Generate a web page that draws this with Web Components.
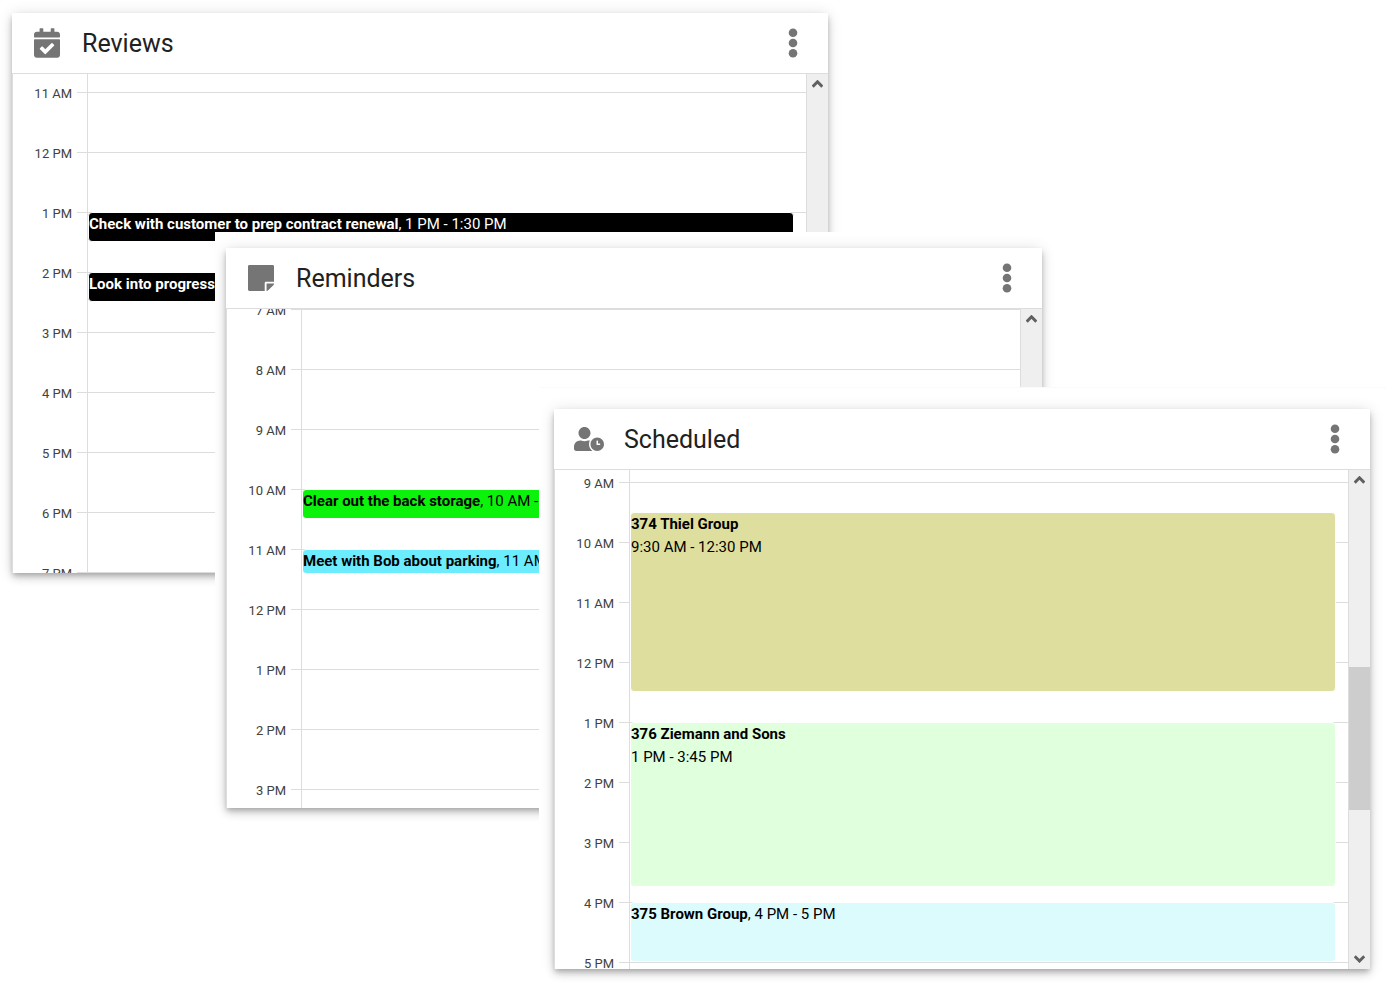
<!DOCTYPE html>
<html lang="en">
<head>
<meta charset="utf-8">
<title>Calendars</title>
<style>
  body { margin: 0; background: #fff; font-family: Roboto, "Liberation Sans", sans-serif; color: #212121; }
</style>
</head>
<body>
<calendar-desktop>
  <calendar-card class="reviews" heading="Reviews" icon="calendar" from="11" hours="9" style="--lead: 18px">
    <calendar-event start="13:00" end="13:30" heading="Check with customer to prep contract renewal" when="1 PM - 1:30 PM" style="--fill: #000; --ink: #fff"></calendar-event>
    <calendar-event start="14:00" end="14:30" heading="Look into progress" when="2 PM - 2:30 PM" style="--fill: #000; --ink: #fff"></calendar-event>
  </calendar-card>
  <calendar-card class="reminders" heading="Reminders" icon="note" from="7" hours="9">
    <calendar-event start="10:00" end="10:30" heading="Clear out the back storage" when="10 AM - 10:30 AM" style="--fill: #0bf20b"></calendar-event>
    <calendar-event start="11:00" end="11:25" heading="Meet with Bob about parking" when="11 AM - 11:25 AM" style="--fill: #6cecff"></calendar-event>
  </calendar-card>
  <calendar-card class="scheduled" heading="Scheduled" icon="person" from="9" hours="9" style="--lead: 12px">
    <calendar-event start="9:30" end="12:30" stacked heading="374 Thiel Group" when="9:30 AM - 12:30 PM" style="--fill: #dedf9f"></calendar-event>
    <calendar-event start="13:00" end="15:45" stacked heading="376 Ziemann and Sons" when="1 PM - 3:45 PM" style="--fill: #dfffdd"></calendar-event>
    <calendar-event start="16:00" end="17:00" heading="375 Brown Group" when="4 PM - 5 PM" style="--fill: #dcfbfc"></calendar-event>
  </calendar-card>
</calendar-desktop>

<script>
const ICONS = {
  calendar: ['0 0 448 512', 26, 30, 'M436 160H12c-6.627 0-12-5.373-12-12v-36c0-26.51 21.49-48 48-48h48V12c0-6.627 5.373-12 12-12h40c6.627 0 12 5.373 12 12v52h128V12c0-6.627 5.373-12 12-12h40c6.627 0 12 5.373 12 12v52h48c26.51 0 48 21.49 48 48v36c0 6.627-5.373 12-12 12zM12 192h424c6.627 0 12 5.373 12 12v260c0 26.51-21.49 48-48 48H48c-26.51 0-48-21.49-48-48V204c0-6.627 5.373-12 12-12zm333.296 95.947l-28.169-28.398c-4.667-4.705-12.265-4.736-16.97-.068L194.12 364.665l-45.98-46.352c-4.667-4.705-12.266-4.736-16.971-.068l-28.397 28.17c-4.705 4.667-4.736 12.265-.068 16.97l82.601 83.269c4.667 4.705 12.265 4.736 16.97.068l142.953-141.805c4.705-4.667 4.736-12.265.068-16.97z'],
  note: ['0 0 448 512', 26, 30, 'M312 320h136V56c0-13.3-10.7-24-24-24H24C10.7 32 0 42.7 0 56v400c0 13.3 10.7 24 24 24h264V344c0-13.2 10.8-24 24-24zm129 55l-98 98c-4.5 4.5-10.6 7-17 7h-6V352h128v6.1c0 6.3-2.5 12.4-7 16.9z'],
  person: ['0 0 640 512', 30, 24, 'M496 224c-79.6 0-144 64.4-144 144s64.4 144 144 144 144-64.4 144-144-64.4-144-144-144zm64 150.3c0 5.3-4.4 9.7-9.7 9.7h-60.6c-5.3 0-9.7-4.4-9.7-9.7v-76.6c0-5.3 4.4-9.7 9.7-9.7h12.6c5.3 0 9.7 4.4 9.7 9.7V352h38.3c5.3 0 9.7 4.4 9.7 9.7v12.6zM320 368c0-27.8 6.7-54.1 18.2-77.5-8-1.5-16.2-2.5-24.6-2.5h-16.7c-22.2 10.2-46.9 16-72.9 16s-50.6-5.8-72.9-16h-16.7C60.2 288 0 348.2 0 422.4V464c0 26.5 21.5 48 48 48h347.1c-45.3-31.9-75.1-84.5-75.1-144zm-96-112c70.7 0 128-57.3 128-128S294.7 0 224 0 96 57.3 96 128s57.3 128 128 128z']
};

const minutes = text => { const [h, m] = text.split(':').map(Number); return h * 60 + m; };
const hourName = h => `${h % 12 || 12} ${h < 12 ? 'AM' : 'PM'}`;

/* Free canvas on which the calendar windows overlap. */
class CalendarDesktop extends HTMLElement {
  constructor() {
    super();
    this.attachShadow({ mode: 'open' }).innerHTML = `
      <style>
        :host { display: block; position: relative; min-height: 100vh; min-width: 1000px; overflow: hidden; }
        ::slotted(calendar-card) { position: absolute; }
        ::slotted(.reviews) { top: 0; left: 0; right: 556px; padding: 13px 16px 16px 12px; }
        ::slotted(.reminders) { top: 232px; left: 215px; right: 342px; padding: 16px 16px 16px 11px; }
        ::slotted(.scheduled) { top: 387px; left: 539px; right: 14px; padding: 21px 16px 16px 15px; border-top: 1px solid #fafafa; }
      </style>
      <slot></slot>`;
  }
}

/* A titled window holding one day of hours. */
class CalendarCard extends HTMLElement {
  connectedCallback() {
    if (this.shadowRoot) return;
    const [box, w, h, path] = ICONS[this.getAttribute('icon')];
    const name = this.getAttribute('heading');
    this.attachShadow({ mode: 'open' }).innerHTML = `
      <style>
        :host { display: block; box-sizing: border-box; overflow: hidden; background: #fff; }
        article { background: #fff; box-shadow: 0 3px 5px -1px rgba(0,0,0,.2), 0 5px 8px rgba(0,0,0,.14), 0 1px 14px rgba(0,0,0,.12); }
        header { display: flex; align-items: center; gap: 20px; height: 60px; padding: 0 20px; border-bottom: 1px solid #ddd; }
        .mark { display: flex; justify-content: center; width: 30px; }
        svg { display: block; fill: #757575; }
        h2 { flex: 1; margin: 0; padding-top: 2px; font-size: 25px; line-height: 32px; font-weight: 400; }
        button { display: flex; align-items: center; justify-content: center; border: 0; padding: 0; background: none; cursor: pointer; }
        .menu { width: 30px; height: 40px; }
        section { display: flex; height: 499px; overflow: hidden; }
        day-grid { flex: 1; }
      </style>
      <article>
        <header>
          <span class="mark"><svg viewBox="${box}" width="${w}" height="${h}" aria-hidden="true"><path d="${path}"/></svg></span>
          <h2>${name}</h2>
          <button class="menu" type="button" aria-label="${name} menu">
            <svg viewBox="0 0 10 30" width="10" height="30"><circle cx="5" cy="4.7" r="4.3"/><circle cx="5" cy="15" r="4.3"/><circle cx="5" cy="25.3" r="4.3"/></svg>
          </button>
        </header>
        <section>
          <day-grid from="${this.getAttribute('from')}" hours="${this.getAttribute('hours')}"><slot></slot></day-grid>
          <scroll-rail></scroll-rail>
        </section>
      </article>`;
    for (const event of this.querySelectorAll('calendar-event')) event.place(Number(this.getAttribute('from')));
  }
}

/* Hour labels, hour lines and a five-minute grid for the events. */
class DayGrid extends HTMLElement {
  connectedCallback() {
    if (this.shadowRoot) return;
    const from = Number(this.getAttribute('from'));
    const hours = Array.from({ length: Number(this.getAttribute('hours')) }, (_, i) => from + i);
    this.attachShadow({ mode: 'open' }).innerHTML = `
      <style>
        :host { display: block; min-width: 0; overflow: hidden; border-left: 1px solid #ddd; }
        .sheet { display: flex; }
        .labels { width: 59px; padding-top: var(--lead, 0px); margin-top: -8px; font-size: 13px; line-height: 20px; text-align: right; color: #424242; }
        .labels div { height: 60px; }
        .ticks { width: 10px; margin-left: 5px; padding-top: var(--lead, 0px); border-right: 1px solid #ddd; }
        .day { flex: 1; min-width: 0; display: grid; grid-template-columns: 1fr; grid-auto-rows: 5px; padding-top: var(--lead, 0px); }
        .ticks div, .line { box-sizing: border-box; height: 60px; border-top: 1px solid #ddd; }
        .line { grid-column: 1; }
      </style>
      <div class="sheet">
        <div class="labels">${hours.map(h => `<div>${hourName(h)}</div>`).join('')}</div>
        <div class="ticks">${hours.map(() => '<div></div>').join('')}</div>
        <div class="day">${hours.map((h, i) => `<div class="line" style="grid-row: ${i * 12 + 1} / span 12"></div>`).join('')}<slot></slot></div>
      </div>`;
  }
}

class CalendarEvent extends HTMLElement {
  connectedCallback() {
    if (this.shadowRoot) return;
    const name = this.getAttribute('heading'), when = this.getAttribute('when');
    this.attachShadow({ mode: 'open' }).innerHTML = `
      <style>
        :host { display: block; box-sizing: border-box; grid-column: 1; margin-right: 12px; overflow: hidden;
          border: 1px solid #fff; border-radius: 4px; background: var(--fill); color: var(--ink, #000);
          font-size: 15px; line-height: 23px; white-space: nowrap; }
        b { font-weight: 700; }
      </style>
      <b>${name}</b>${this.hasAttribute('stacked') ? '<br>' : ', '}${when}`;
  }
  place(from) {
    const start = minutes(this.getAttribute('start')) - from * 60;
    const end = minutes(this.getAttribute('end')) - from * 60;
    this.style.gridRow = `${start / 5 + 1} / ${end / 5 + 1}`;
  }
}

class ScrollRail extends HTMLElement {
  constructor() {
    super();
    this.attachShadow({ mode: 'open' }).innerHTML = `
      <style>
        :host { display: flex; flex-direction: column; width: 21px; border-left: 1px solid #ddd; background: #efefef; }
        button { display: flex; align-items: center; justify-content: center; height: 20px; border: 0; padding: 0; background: none; }
        svg { display: block; fill: none; stroke: #606060; stroke-width: 3; }
        .before { flex: 177; } .thumb { flex: 143; background: #cdcdcd; } .after { flex: 139; }
      </style>
      <button type="button" aria-label="Scroll up"><svg width="11" height="8" viewBox="0 0 11 8"><path d="M0.7 6.6 5.5 1.8 10.3 6.6"/></svg></button>
      <div class="before"></div><div class="thumb"></div><div class="after"></div>
      <button type="button" aria-label="Scroll down"><svg width="11" height="8" viewBox="0 0 11 8"><path d="M0.7 1.2 5.5 6 10.3 1.2"/></svg></button>`;
  }
}

customElements.define('calendar-event', CalendarEvent);
customElements.define('scroll-rail', ScrollRail);
customElements.define('day-grid', DayGrid);
customElements.define('calendar-card', CalendarCard);
customElements.define('calendar-desktop', CalendarDesktop);
</script>
</body>
</html>
